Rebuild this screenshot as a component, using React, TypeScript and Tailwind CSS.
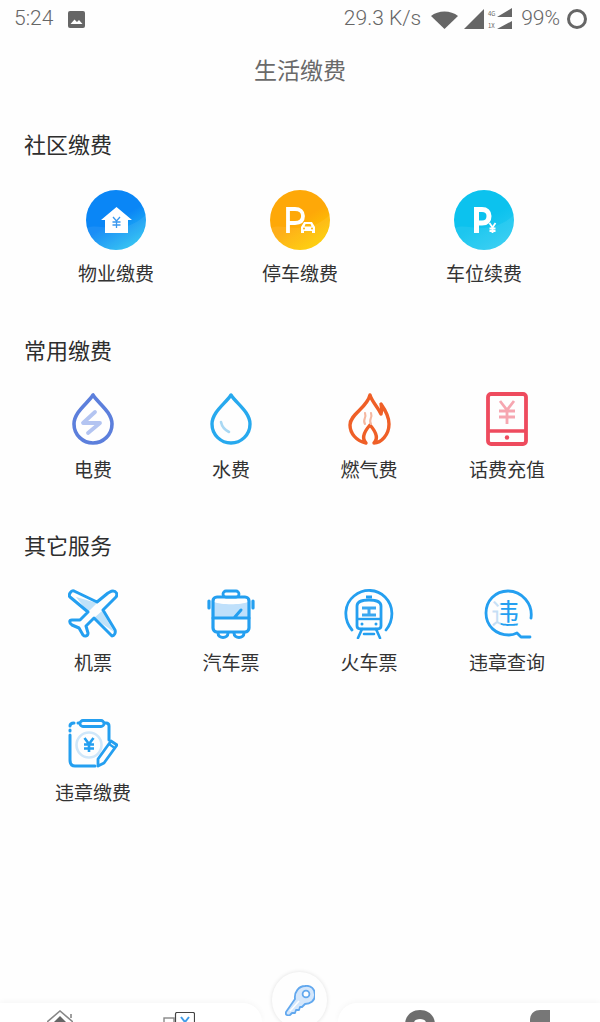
import type { ReactNode } from "react";

const font = { fontFamily: '"Noto Sans CJK SC", "Noto Sans", sans-serif' };
const statusFont = { fontFamily: "Roboto, sans-serif", fontWeight: 300 };

function CommunityIcon({ from, to, children }: { from: string; to: string; children: ReactNode }) {
  return (
    <svg width="60" height="60" viewBox="0 0 60 60">
      <defs>
        <linearGradient id={from} x1="0.2" y1="0" x2="0.8" y2="1">
          <stop offset="0.5" stopColor={from} />
          <stop offset="1" stopColor={to} />
        </linearGradient>
      </defs>
      <circle cx="30" cy="30" r="30" fill={`url(#${from})`} />
      <path d="M1 38 C14 32 34 48 60 25 C60 48 46 60 30 60 C14 60 4 50 1 38Z" fill="#ffffff" opacity="0.07" />
      {children}
    </svg>
  );
}

function HouseIcon() {
  return (
    <CommunityIcon from="#0a86f6" to="#2cc6f2">
      <path d="M30.5 17 L46 30 L42 30 L42 43 L19 43 L19 30 L15 30 Z" fill="#fff" />
      <path d="M27 27 L30.5 31 L34 27 M30.5 31 V38 M26.5 32 H34.5 M26.5 35 H34.5" stroke="#3a98ee" strokeWidth="1.3" fill="none" />
    </CommunityIcon>
  );
}

function ParkCarIcon() {
  return (
    <CommunityIcon from="#fea808" to="#fdd200">
      <path d="M18 43 V19 H25 C30 19 33 22 33 26 C33 31 30 33 25 33 H18" stroke="#fff" strokeWidth="3.8" fill="none" />
      <path d="M31 43 V37 L34 32 H42 L45 37 V43 H42 V41 H34 V43 Z" fill="#fff" />
      <path d="M34.5 36.5 L35.5 34 H40.5 L41.5 36.5 Z" fill="#fdb70a" />
      <circle cx="34" cy="38.6" r="1" fill="#fdb70a" />
      <circle cx="42" cy="38.6" r="1" fill="#fdb70a" />
    </CommunityIcon>
  );
}

function ParkYenIcon() {
  return (
    <CommunityIcon from="#0cc2ee" to="#2fcdf2">
      <path d="M22.5 43 V19.5 H28 C32.5 19.5 35 22 35 26 C35 30.5 32.5 33 28 33 H22.5" stroke="#fff" strokeWidth="5" fill="none" />
      <path d="M35.5 33 L38.5 37.5 L41.5 33 M38.5 37.5 V43 M35.5 38.5 H41.5 M35.5 41 H41.5" stroke="#fff" strokeWidth="1.8" fill="none" />
    </CommunityIcon>
  );
}

function PowerIcon() {
  return (
    <svg width="44" height="54" viewBox="0 0 44 54" fill="none">
      <path d="M22 3 C17 11 3 20 3 32 C3 43 12 51 22 51 C32 51 41 43 41 32 C41 20 27 11 22 3Z" stroke="#5c7fdc" strokeWidth="3.6" strokeLinejoin="round" />
      <path d="M24 20 L12 31 L29 31 L17 41" stroke="#b3c4f1" strokeWidth="3.8" strokeLinecap="round" strokeLinejoin="round" />
    </svg>
  );
}

function WaterIcon() {
  return (
    <svg width="44" height="54" viewBox="0 0 44 54" fill="none">
      <path d="M22 3 C17 11 3 20 3 32 C3 43 12 51 22 51 C32 51 41 43 41 32 C41 20 27 11 22 3Z" stroke="#27a9ee" strokeWidth="3.4" strokeLinejoin="round" />
      <path d="M12 30 C13 35 16 38 20 40" stroke="#a9d8f3" strokeWidth="2.6" strokeLinecap="round" />
    </svg>
  );
}

function GasIcon() {
  return (
    <svg width="44" height="54" viewBox="0 0 44 54" fill="none">
      <path d="M23 3 C25 10 31 15 34 22 C35 18 35 15 34 12 C39 19 42 26 42 32 C42 43 34 51 27 51 C31 47 30 41 23 33 C16 41 15 47 19 51 C9 49 3 41 3 33 C3 22 20 16 23 3Z" stroke="#ef5f27" strokeWidth="3.4" strokeLinejoin="round" />
      <path d="M18 32 C15 28 20 26 18 21 M24 32 C21 28 26 26 24 21" stroke="#f5b7a0" strokeWidth="2.1" strokeLinecap="round" />
    </svg>
  );
}

function PhoneIcon() {
  return (
    <svg width="42" height="54" viewBox="0 0 42 54" fill="none">
      <rect x="2" y="2" width="38" height="50" rx="3" stroke="#ee4b5e" strokeWidth="3.8" />
      <path d="M2 39 H40" stroke="#ee4b5e" strokeWidth="3.4" />
      <circle cx="21" cy="45.5" r="2.2" fill="#ee4b5e" />
      <path d="M14 9 L21 18 L28 9 M21 18 V32 M13 19 H29 M13 25 H29" stroke="#f6a6b0" strokeWidth="2.8" />
    </svg>
  );
}

function PlaneIcon() {
  return (
    <svg width="50" height="50" viewBox="0 0 50 50" fill="none">
      <path d="M8 8 L29 14 L20 23 Z M34 22 L46 43 L26 29 Z" fill="#bfe2f9" />
      <path d="M45 2 C48 2 50 5 48 8 L35 21 L47 41 C48 44 46 47 44 47 L26 29 L18 37 L20 44 C20 47 17 48 15 46 L11 39 L4 36 C1 34 1 31 4 31 L12 31 L20 23 L2 8 C0 6 3 1 6 2 L29 13 L40 4 C42 3 43 2 45 2Z" stroke="#249ff0" strokeWidth="3" strokeLinejoin="round" />
      <path d="M33 15 L40 9" stroke="#ffffff" strokeWidth="2" />
    </svg>
  );
}

function BusIcon() {
  return (
    <svg width="48" height="50" viewBox="0 0 48 50" fill="none">
      <path d="M7 11 H41 V29 H7Z" fill="#bfe0fb" />
      <path d="M7 8 H41 V13 C34 16 14 16 7 13Z" fill="#fefefe" />
      <rect x="6" y="8" width="36" height="35" rx="4" stroke="#249ff0" strokeWidth="3.2" />
      <rect x="16" y="2" width="16" height="6" rx="3" stroke="#249ff0" strokeWidth="2.8" fill="#fefefe" />
      <path d="M6 29 H42 M27 29 L34 21" stroke="#249ff0" strokeWidth="3" strokeLinecap="round" />
      <path d="M2 12 V19 M46 12 V19" stroke="#249ff0" strokeWidth="3.2" strokeLinecap="round" />
      <path d="M11 44 C11 50 21 50 21 44 M27 44 C27 50 37 50 37 44" stroke="#249ff0" strokeWidth="3" />
    </svg>
  );
}

function TrainIcon() {
  return (
    <svg width="50" height="50" viewBox="0 0 50 50" fill="none">
      <path d="M8 41 C-1 30 0 15 10 7 C20 -1 33 0 41 8 C50 17 50 31 42 41" stroke="#249ff0" strokeWidth="2.8" strokeLinecap="round" />
      <path d="M13 17 C13 13 17 11 25 11 C33 11 37 13 37 17 V37 C37 39 35 40 33 40 H17 C15 40 13 39 13 37Z" stroke="#249ff0" strokeWidth="2.8" />
      <path d="M22 8 H28" stroke="#249ff0" strokeWidth="3" />
      <path d="M13 30 H37" stroke="#249ff0" strokeWidth="2.4" />
      <path d="M18 19 H32 M18 26 H32 M25 19 V26" stroke="#3aa7f0" strokeWidth="3" />
      <circle cx="18" cy="35" r="1.5" fill="#249ff0" />
      <circle cx="32" cy="35" r="1.5" fill="#249ff0" />
      <path d="M18 40 L14 49 M32 40 L36 49 M20 45 H30" stroke="#249ff0" strokeWidth="2.6" strokeLinecap="round" />
    </svg>
  );
}

function ViolationIcon() {
  return (
    <svg className="ml-[3px]" width="50" height="50" viewBox="0 0 50 50" fill="none">
      <defs>
        <linearGradient id="wz" x1="0" y1="0" x2="1" y2="0">
          <stop offset="0.32" stopColor="#c6dff5" />
          <stop offset="0.38" stopColor="#249ff0" />
        </linearGradient>
      </defs>
      <path d="M47 29 C49 15 38 2 24 2 C11 2 2 12 2 24 C2 37 12 46 25 46 C28 46 31 45 33 44 L37 48 H46" stroke="#249ff0" strokeWidth="2.8" strokeLinecap="round" strokeLinejoin="round" />
      <text x="7" y="35" fontSize="28" fill="url(#wz)" style={{ ...font, fontWeight: 400 }}>违</text>
    </svg>
  );
}

function ClipboardIcon() {
  return (
    <svg width="50" height="50" viewBox="0 0 50 50" fill="none">
      <path d="M10 4 H38 C40 4 41 5 41 7 V21 M2 16 V41 C2 45 4 47 7 47 H27 M2 7 C2 5 3 4 6 4" stroke="#249ff0" strokeWidth="3" strokeLinecap="round" />
      <path d="M2 11 V12" stroke="#249ff0" strokeWidth="3" strokeLinecap="round" />
      <rect x="12" y="1.5" width="24" height="6" rx="3" fill="#fefefe" stroke="#249ff0" strokeWidth="2.8" />
      <circle cx="21" cy="26" r="12.5" stroke="#d0e7f9" strokeWidth="2.6" />
      <path d="M16.5 19 L21 25 L25.5 19 M21 25 V33 M16 25.5 H26 M16 29.5 H26" stroke="#249ff0" strokeWidth="2.6" />
      <path d="M43 22 L49 26 L36 44 L30 47 L30 40 Z" stroke="#249ff0" strokeWidth="2.8" strokeLinejoin="round" fill="#fefefe" />
      <path d="M41 25 L46 28.5" stroke="#249ff0" strokeWidth="2.2" />
    </svg>
  );
}

function KeyIcon() {
  return (
    <svg width="30" height="31" viewBox="0 0 30 31" fill="none">
      <path d="M20 1 C26 0 30 4 30 10 C30 16 25 19 20 19 L17 22 L15 22 L14 25 L11 25 L10 28 L7 28 L5 30 C3 31 0 30 1 27 L10 14 C9 7 14 1 20 1Z" fill="#d5e7fb" stroke="#62a8ee" strokeWidth="1.8" strokeLinejoin="round" />
      <circle cx="21" cy="9" r="3.4" fill="#fefefe" stroke="#62a8ee" strokeWidth="1.8" />
      <path d="M5 26 L14 16" stroke="#fefefe" strokeWidth="1.6" />
    </svg>
  );
}

function Tile({ icon, label, iconH }: { icon: ReactNode; label: string; iconH: string }) {
  return (
    <div className="flex flex-col items-center gap-[10px]">
      <div className={`flex items-center justify-center ${iconH}`}>{icon}</div>
      <span className="text-[19px] leading-[26px] text-[#333]">{label}</span>
    </div>
  );
}

function Heading({ children }: { children: ReactNode }) {
  return <h2 className="text-[22px] leading-[30px] font-normal text-[#2e2e2e]">{children}</h2>;
}

export default function App() {
  return (
    <div style={font} className="relative flex h-[1022px] w-[600px] flex-col overflow-hidden bg-[#fefefe]">
      {/* status bar */}
      <div className="flex h-[38px] items-center pl-[14px] pr-[13px] text-[21px] text-[#666]">
        <span style={statusFont}>5:24</span>
        <svg className="ml-[15px]" width="17" height="17" viewBox="0 0 17 17">
          <rect width="17" height="17" rx="2" fill="#666" />
          <path d="M2.5 13 L6.5 8.5 L9 11 L11 9 L14.5 13Z" fill="#fff" />
        </svg>
        <span className="ml-auto" style={statusFont}>29.3 K/s</span>
        <svg className="ml-[10px]" width="27" height="19" viewBox="0 0 27 19">
          <path d="M0 6 C7 0 20 0 27 6 L13.5 19Z" fill="#666" />
        </svg>
        <svg className="ml-[6px]" width="48" height="22" viewBox="0 0 48 22">
          <path d="M0 21 L20 1 V21Z" fill="#666" />
          <path d="M33 9 L48 0 V9Z M33 21 L48 13 V21Z" fill="#666" />
          <text x="24" y="8" fontSize="6" fill="#666">4G</text>
          <text x="24" y="20" fontSize="6" fill="#666">1X</text>
        </svg>
        <span className="ml-[9px]" style={statusFont}>99%</span>
        <span className="ml-[7px] h-[20px] w-[20px] rounded-full border-[3.5px] border-[#666]" />
      </div>

      {/* title */}
      <h1 className="mt-[14px] text-center text-[23px] leading-[34px] font-normal text-[#6a6a6a]">生活缴费</h1>

      <main className="px-[24px]">
        <section className="mt-[42px]">
          <Heading>社区缴费</Heading>
          <div className="mt-[32px] grid grid-cols-3">
            <Tile icon={<HouseIcon />} label="物业缴费" iconH="h-[60px]" />
            <Tile icon={<ParkCarIcon />} label="停车缴费" iconH="h-[60px]" />
            <Tile icon={<ParkYenIcon />} label="车位续费" iconH="h-[60px]" />
          </div>
        </section>

        <section className="mt-[48px]">
          <Heading>常用缴费</Heading>
          <div className="mt-[28px] grid grid-cols-4">
            <Tile icon={<PowerIcon />} label="电费" iconH="h-[54px]" />
            <Tile icon={<WaterIcon />} label="水费" iconH="h-[54px]" />
            <Tile icon={<GasIcon />} label="燃气费" iconH="h-[54px]" />
            <Tile icon={<PhoneIcon />} label="话费充值" iconH="h-[54px]" />
          </div>
        </section>

        <section className="mt-[47px]">
          <Heading>其它服务</Heading>
          <div className="mt-[30px] grid grid-cols-4 gap-y-[44px]">
            <Tile icon={<PlaneIcon />} label="机票" iconH="h-[50px]" />
            <Tile icon={<BusIcon />} label="汽车票" iconH="h-[50px]" />
            <Tile icon={<TrainIcon />} label="火车票" iconH="h-[50px]" />
            <Tile icon={<ViolationIcon />} label="违章查询" iconH="h-[50px]" />
            <Tile icon={<ClipboardIcon />} label="违章缴费" iconH="h-[50px]" />
          </div>
        </section>
      </main>

      {/* bottom nav, cut off by the screenshot */}
      <nav className="mt-auto flex h-[19px] justify-between">
        <div className="flex w-[262px] items-start rounded-tr-[44px] bg-white pt-[7px] shadow-[0_-1px_6px_rgba(0,0,0,0.04)]">
          <svg className="ml-[47px]" width="26" height="12" viewBox="0 0 26 12" fill="none">
            <path d="M0 12 L13 1 L26 12 M24 4 V8" stroke="#888" strokeWidth="1.6" />
            <path d="M7 12 L13 6 L19 12Z" fill="#666" />
          </svg>
          <svg className="ml-[90px] mt-[2px]" width="32" height="10" viewBox="0 0 32 10" fill="none">
            <rect x="1" y="6" width="10" height="8" stroke="#888" strokeWidth="1.4" />
            <rect x="12.5" y="0.5" width="19" height="14" rx="1.5" stroke="#444" strokeWidth="1.2" fill="#fff" />
            <path d="M18 5 L22 10 L26 5" stroke="#3f9be8" strokeWidth="2" />
          </svg>
        </div>
        <div className="flex w-[262px] items-start rounded-tl-[44px] bg-white pt-[7px] shadow-[0_-1px_6px_rgba(0,0,0,0.04)]">
          <svg className="ml-[67px]" width="30" height="12" viewBox="0 0 30 12">
            <path d="M0 15 C0 6 6 0 15 0 C24 0 30 6 30 15Z" fill="#6e6e6e" />
            <path d="M9 13 C9 10 12 9 15 9 C18 9 21 10 21 13Z" fill="#fff" />
          </svg>
          <svg className="ml-[95px]" width="20" height="12" viewBox="0 0 20 12">
            <path d="M20 0 V12 H0 V10 C0 4 4 0 10 0Z" fill="#777" />
          </svg>
        </div>
      </nav>

      {/* floating key button */}
      <div className="absolute top-[972px] left-[272px] flex h-[56px] w-[55px] items-start justify-center rounded-full bg-[#fefefe] pt-[13px] shadow-[0_0_4px_rgba(0,0,0,0.12)]">
        <KeyIcon />
      </div>
    </div>
  );
}
